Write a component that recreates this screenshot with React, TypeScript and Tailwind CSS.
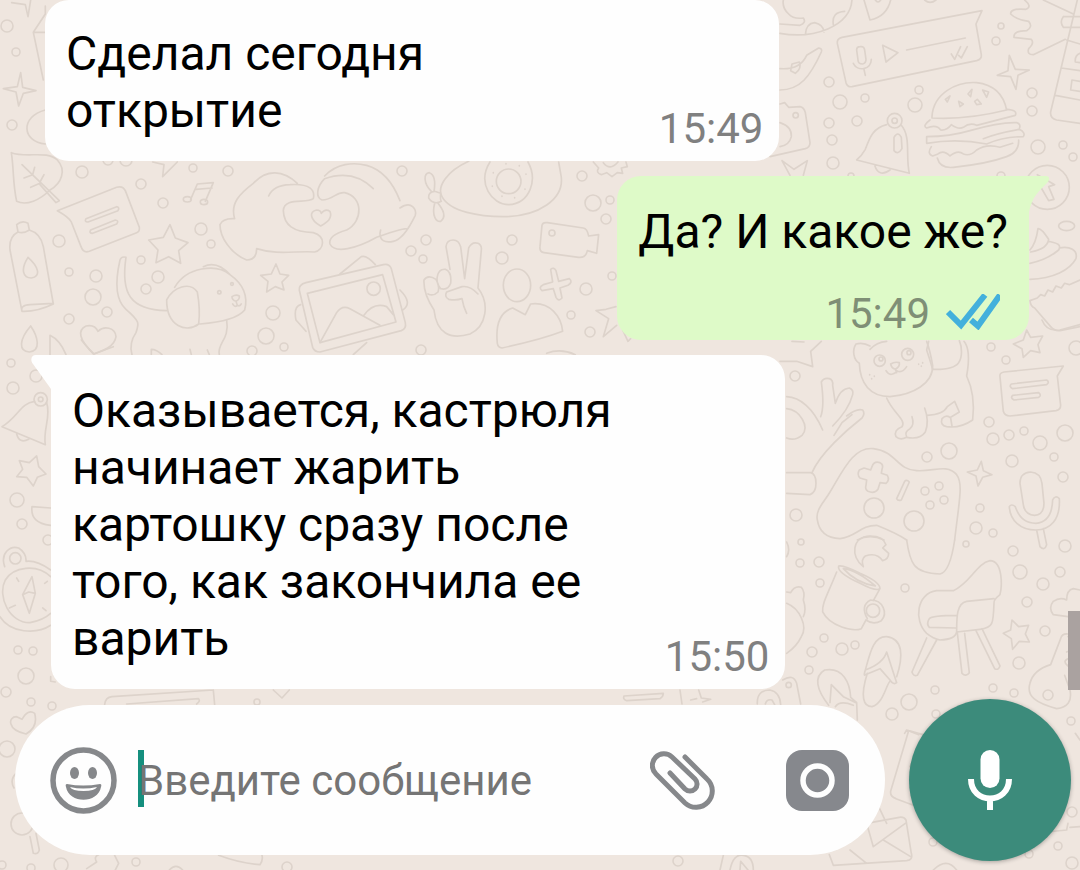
import type { ReactNode } from "react";

// x, y, radius of the small bubbles scattered over the wallpaper
const DOTS = [
  [82, 172, 6], [141, 184, 5], [163, 203, 5], [193, 168, 4], [228, 171, 5], [201, 229, 6], [211, 244, 4],
  [141, 260, 4], [158, 277, 6], [146, 289, 5], [59, 241, 6], [69, 272, 4], [96, 276, 6], [93, 297, 8],
  [107, 312, 5], [69, 319, 5], [11, 363, 4], [273, 313, 7], [266, 336, 8], [284, 347, 4], [252, 351, 5],
  [108, 160, 5], [126, 160, 6],
  [402, 171, 5], [426, 240, 5], [411, 251, 5], [423, 259, 4], [512, 240, 5], [502, 258, 6], [582, 176, 5],
  [593, 203, 8], [610, 200, 4], [606, 219, 5], [612, 276, 4], [586, 289, 6], [571, 315, 4], [590, 332, 5],
  [421, 350, 5],
  [829, 82, 5], [840, 102, 7], [865, 98, 4], [919, 90, 4], [915, 105, 7], [829, 123, 5], [857, 121, 5],
  [832, 140, 5], [833, 163, 6], [1001, 26, 3], [996, 41, 4], [1032, 93, 5], [1032, 111, 5], [1038, 147, 7],
  [1063, 145, 4], [1073, 157, 4], [851, 176, 3], [1001, 176, 4],
  [991, 347, 4], [1006, 360, 4], [795, 376, 5], [989, 422, 5], [993, 439, 6], [1009, 435, 5], [1024, 431, 4],
  [1040, 443, 7], [1065, 433, 8], [1054, 457, 4], [1012, 461, 6], [1063, 477, 5], [980, 508, 4], [976, 528, 6],
  [993, 533, 4], [927, 457, 5], [949, 451, 8], [796, 515, 6], [1076, 348, 7],
  [874, 508, 10], [914, 521, 10], [925, 491, 4], [939, 486, 4], [930, 505, 4], [944, 500, 4],
  [801, 542, 3], [800, 563, 4], [819, 562, 5], [820, 583, 4], [905, 588, 4], [966, 544, 3], [1013, 551, 5],
  [1020, 572, 7], [1043, 584, 6], [1060, 572, 5], [1065, 546, 6], [1027, 602, 5], [1045, 631, 5],
  [1019, 663, 6], [824, 638, 4], [812, 652, 5], [842, 649, 6], [855, 645, 4], [809, 670, 4], [935, 690, 4],
  [909, 702, 8], [892, 714, 6], [936, 714, 4], [993, 688, 4], [1014, 693, 4], [1048, 695, 5], [1071, 721, 4],
  [13, 388, 6], [17, 500, 7], [22, 524, 5], [18, 650, 4], [33, 651, 4], [26, 676, 8], [6, 692, 5],
  [31, 702, 4], [52, 706, 4], [7, 26, 6], [16, 52, 4], [12, 125, 5], [36, 376, 6], [48, 540, 5],
  [7, 749, 8], [2, 865, 4], [31, 868, 4], [61, 865, 7], [136, 862, 4], [287, 867, 5], [257, 702, 3],
  [678, 861, 5], [933, 842, 4], [1072, 812, 5], [1058, 846, 4], [1029, 854, 4], [1072, 863, 6],
];

function Sketch({ x, y, children }: { x: number; y: number; children: ReactNode }) {
  return <g transform={`translate(${x} ${y}) scale(0.3333)`}>{children}</g>;
}

function Wallpaper() {
  return (
    <svg
      className="absolute inset-0 h-full w-full"
      viewBox="0 0 1080 870"
      preserveAspectRatio="xMinYMin slice"
      fill="none"
      stroke="#ddd3cb"
      strokeWidth="5"
      strokeLinecap="round"
      strokeLinejoin="round"
      aria-hidden="true"
    >
      <g strokeWidth="1.6">
        {DOTS.map(([x, y, r]) => (
          <circle key={`${x}-${y}`} cx={x} cy={y} r={r} />
        ))}
      </g>

      {/* Top left: stars, leaf */}
      <Sketch x={0} y={0}>
        <path d="M35 8 L76 14 L84 50 L92 0 M62 218 L68 262 L108 272 L70 280 L56 318 L48 276 L10 266 L52 260 Z" />
        <path d="M136 18 V42 L100 97 L130 240 M100 97 H136 M136 330 C60 350 65 425 136 432" />
      </Sketch>

      {/* Left: leaf, note, bottle, puppy, heart hands */}
      <Sketch x={0} y={140}>
        <path d="M34 38 C80 55 140 30 172 60 C200 90 185 130 150 150 C120 180 80 198 50 184 C38 130 42 90 34 38 Z" />
        <path d="M66 74 L178 182 L168 188 L120 134 M98 104 L104 82 M98 104 L72 114 M120 126 L132 104 M120 130 L92 142" />
        <path d="M172 212 L350 142 Q368 136 376 152 L418 262 Q420 274 410 278 L268 334 Q250 340 244 322 L214 246 Q208 232 172 212 Z" />
        <path d="M258 236 L350 200 Q360 202 354 212 L264 246 Q252 246 258 236 Z M272 270 L346 240 Q358 242 350 252 L278 280 Q266 280 272 270 Z" />
        <path d="M50 254 Q66 240 84 250 L88 270 Q70 282 54 276 Z M54 276 Q26 290 30 330 L66 514 Q110 516 160 492 L130 320 Q122 280 88 270 M66 514 Q60 496 90 494 L160 490 M84 352 C60 390 70 414 94 414 C124 410 116 380 84 352 Z" />
        <path d="M92 558 C56 600 56 634 88 636 C124 632 114 590 92 558 Z M150 646 V586 Q180 600 198 644" />
        <path d="M282 642 C236 600 232 570 258 558 Q284 552 294 574 C312 556 346 562 348 590 C344 620 310 632 282 642 Z" />
        <path d="M510 254 L526 294 L564 308 L536 332 L542 370 L506 350 L468 368 L474 330 L446 300 L490 292 Z" />
        <path d="M828 372 L840 402 L866 406 L846 426 L852 450 L826 440 L800 456 L804 424 L782 406 L814 402 Z" />
        <path d="M378 352 Q364 348 360 360 C344 430 346 480 378 508 C420 544 418 550 408 578 Q386 610 396 644 M378 352 C362 460 390 510 500 512" />
        <path d="M524 442 C560 380 650 370 690 404 C740 440 742 480 734 510 C710 540 650 548 600 552 M610 380 Q650 360 690 404 M500 480 C520 440 570 424 592 456 C600 500 600 520 596 552 C560 580 500 560 500 480 Z" />
        <path d="M696 470 Q708 462 718 468 Q720 478 708 484 Q696 480 696 470 Z M708 484 L712 496 M698 492 Q704 504 712 496 Q720 500 724 492 M680 540 C690 600 650 610 658 644 M454 644 V628 Q470 628 486 644 M570 628 L574 644 M622 630 L628 644" />
        <circle cx="658" cy="457" r="5" /><circle cx="696" cy="432" r="4" />
        <path d="M458 66 L492 74 L488 110 L532 66 M572 178 L592 132 L640 128 L616 184 M588 148 L636 144" />
        <ellipse cx="562" cy="178" rx="12" ry="8" /><ellipse cx="612" cy="186" rx="11" ry="8" />
        <path d="M806 168 Q820 136 870 134 C930 130 946 150 940 176 C920 192 852 170 850 212 C852 256 880 276 940 278 C980 290 972 330 944 336 C890 332 830 346 770 326 Q770 360 740 360 C690 340 660 290 660 254 Q668 234 704 236 C690 190 720 160 760 130 C800 86 850 90 892 130" />
        <path d="M962 258 C930 240 926 214 950 210 Q962 210 964 220 Q976 204 990 214 C998 236 982 246 962 258 Z" />
        <path d="M1120 146 Q1060 86 974 116 C950 140 946 172 966 180 C1000 180 1010 154 1034 158 C1090 170 1090 244 1040 270 Q984 286 990 312 C1004 342 1070 326 1130 292 Q1220 260 1220 268" />
        <path d="M974 108 C1010 70 1060 66 1100 76 C1150 90 1180 130 1200 182 M1200 204 C1236 180 1250 210 1246 226 C1220 280 1200 300 1180 304 Q1140 312 1140 280 L1142 270" />
        <path d="M898 450 Q896 434 918 428 L1150 374 Q1168 370 1174 386 L1216 548 Q1220 566 1204 572 L960 636 Q944 636 938 622 Z M922 460 L1148 404 L1188 546 L960 608 Z" />
        <path d="M960 608 L1010 518 Q1026 494 1050 506 L1140 556 M1092 526 Q1120 486 1160 500 L1180 524 M1020 402 L1084 350 Q1100 344 1126 374 M888 540 Q880 500 902 494 M888 540 L918 574 M1060 644 L1100 608 M1200 450 Q1240 490 1208 510" />
        <circle cx="1121" cy="446" r="20" />
      </Sketch>

      {/* Centre: submarine, peace hand, contact, camera */}
      <Sketch x={340} y={140}>
        <path d="M386 64 C320 94 290 140 306 170 C330 216 420 230 490 230 C590 230 680 180 662 100 L656 66" />
        <circle cx="506" cy="124" r="37" />
        <path d="M450 66 C410 130 456 194 506 194 C570 190 594 120 564 66" />
        <path d="M460 98 v1 M498 71 v1 M538 77 v1 M558 102 v1 M555 147 v1 M524 173 v1 M486 168 v1 M457 138 v1" />
        <path d="M266 174 Q264 156 284 154 L302 160 Q300 180 304 184 Q280 196 266 174 Z M274 154 C250 130 250 100 268 98 Q290 106 282 154 M284 190 C274 230 290 246 302 244 C320 230 310 210 294 190" />
        <path d="M760 66 L776 84 Q766 98 784 104 L800 98 L816 110 L832 98 L848 100 L844 84 L862 80 L858 66 M790 68 Q810 94 834 66" />
        <path d="M606 256 Q608 246 622 248 L730 264 Q742 266 746 288 L776 284 L770 340 L742 332 Q738 354 716 352 L612 338 Q598 336 600 320 Z" />
        <circle cx="636" cy="279" r="9" />
        <path d="M330 388 L318 320 Q320 300 340 300 Q356 300 362 320 L374 416 L386 324 Q396 304 414 310 Q426 316 424 330 L414 444 C450 490 440 560 390 582 C330 600 290 580 282 510 C262 480 250 450 252 420 Q264 402 288 418 Q300 438 294 456 Q280 470 264 462 M292 410 Q296 386 316 388 Q336 396 332 430 Q324 452 302 446 Q288 430 292 410" />
        <path d="M414 462 Q390 436 366 440 L320 456 Q312 470 326 478 Q350 482 366 476 Q370 500 380 520" />
        <ellipse cx="531" cy="436" rx="41" ry="49" />
        <path d="M472 610 C466 550 480 516 518 504 L556 524 L572 492 C630 484 664 530 668 574 Q600 600 486 624 Q474 622 472 610 Z" />
        <path d="M632 388 Q642 380 648 392 L656 424 L688 416 Q700 426 684 436 L660 444 L666 474 Q656 486 648 472 L640 446 L606 452 Q594 442 610 434 L638 426 Z" />
        <path d="M828 500 L798 508 L768 512 L806 536 L790 590 L830 556 M848 570 L864 604 L872 596 M620 640 Q662 624 706 644" />
      </Sketch>

      {/* Top right: voice note, bell, burger, shirt */}
      <Sketch x={770} y={0}>
        <path d="M30 72 L90 76 Q110 68 100 54 Q70 58 56 42 Q36 24 40 0 M30 100 C130 118 240 80 246 0 M106 104 Q108 70 134 68 Q160 74 162 96 M190 74 Q184 36 224 34" />
        <path d="M282 0 L300 60 Q350 50 362 0 M316 0 Q324 12 332 0 M464 0 Q480 14 498 0" />
        <path d="M202 130 Q200 116 216 112 L636 32 L618 72 L634 164 Q636 178 620 182 L246 260 Q232 262 228 248 Z M338 136 L384 158 L348 186 Z M410 150 L586 114" />
        <path d="M260 150 Q260 140 270 140 Q282 138 284 150 L288 178 Q288 190 278 192 Q264 192 264 180 Z M250 190 C262 216 304 210 304 178 M282 208 L286 226 M544 162 L554 178 L572 140 M566 166 L574 174 L592 140" />
        <path d="M30 206 Q90 210 110 166 L146 144 Q158 146 154 156 C120 230 90 270 30 270 M62 212 L66 192 L88 186 Q96 206 76 220 Z" />
        <path d="M30 312 L44 308 L56 322 L90 320 Q102 322 106 338 L120 428 Q120 442 106 446 L0 470 M30 368 Q66 380 64 410 Q58 436 30 440" />
        <circle cx="77" cy="346" r="8" /><circle cx="374" cy="362" r="22" /><circle cx="374" cy="362" r="8" />
        <path d="M350 374 C310 384 300 410 286 448 Q276 466 260 480 L418 520 C406 470 424 410 394 376 M372 412 Q384 392 394 412 L396 446 Q384 466 372 452 Z M314 496 Q326 534 360 510" />
        <path d="M36 482 L72 508 L112 482 L100 526 M36 482 L60 526" />
        <path d="M486 350 C490 280 560 244 620 248 C670 254 700 280 710 330 Q590 360 486 354 Z M526 298 L540 288 L532 306 Z M566 304 L580 312 L570 320 Z M594 282 L606 268 L602 290 Z M638 270 L656 276 L650 292 Z M614 304 L622 298 L634 312 L620 314 Z" />
        <path d="M480 360 Q456 378 470 384 Q500 372 512 390 Q530 392 544 374 Q566 390 580 382 Q600 366 620 376 L736 346 Q744 330 710 328 M470 410 Q540 410 600 392 Q690 366 740 368 Q754 372 748 386 M470 410 L470 430 Q560 414 650 432 Q700 410 760 410 Q768 398 748 388 Q680 400 640 416" />
        <path d="M484 440 Q470 462 488 468 L504 462 Q520 448 540 468 Q564 448 580 462 Q600 470 620 450 Q650 430 690 442 L728 430 M502 474 Q510 506 550 502 Q650 492 710 470 Q748 456 746 420" />
        <path d="M718 166 L736 208 L778 210 L744 226 L738 268 L722 230 L682 226 L714 212 Z" />
        <path d="M764 0 Q788 20 768 28 Q720 24 722 42 Q740 60 776 64 Q790 80 770 92 Q730 92 732 112 L784 118 Q794 130 776 146 Q770 164 790 164 L886 118 M820 0 L910 42 M922 0 L842 336 Q840 356 860 360 L930 370 M890 120 L930 132 M874 204 L930 212 M856 286 L930 300 M880 50 H930 M880 82 H930 M880 50 Q868 66 880 82 M930 160 Q914 166 916 186 L930 188 M930 244 L906 240 L902 270 L930 274" />
      </Sketch>

      {/* Right edge: badge and cupcake */}
      <Sketch x={800} y={170}>
        <circle cx="742" cy="52" r="66" />
        <path d="M712 14 L764 44 L746 50 L762 88 L746 92 L724 54" />
        <ellipse cx="800" cy="168" rx="24" ry="14" />
        <path d="M690 240 Q708 220 714 176 Q724 174 746 208 C744 226 724 240 692 246 M746 214 C770 220 786 222 776 240 Q740 270 690 280 M778 234 C810 228 834 240 828 266 C810 300 760 326 690 328" />
        <path d="M690 392 L712 384 L722 374 L734 378 L744 360 L758 366 L768 348 L784 354 L794 340 L808 344 L840 330 M690 392 Q692 410 704 414 L752 470 Q764 484 780 482 L840 470" />
      </Sketch>

      {/* Right: cat, hand, gamepad, note, microphone */}
      <Sketch x={780} y={320}>
        <path d="M740 30 L752 52 L788 48 L774 74 L780 98 L752 92 L730 112 L726 86 L700 72 L730 60 Z M786 0 Q800 36 840 30 L900 14" />
        <path d="M0 124 L50 124 L98 140 L92 94 L124 64 M36 64 L72 66" />
        <path d="M270 78 Q250 66 228 72 C216 90 220 120 238 130 C240 190 270 230 330 230 C400 224 460 190 458 136 Q450 90 440 64 M270 88 Q290 66 320 64" />
        <circle cx="299" cy="122" r="17" /><circle cx="383" cy="103" r="18" /><circle cx="303" cy="117" r="6" /><circle cx="387" cy="98" r="6" />
        <path d="M332 132 Q344 124 358 128 Q360 140 346 148 Q334 144 332 132 Z M346 148 L350 158 M318 152 Q326 166 338 162 Q350 158 350 152 Q366 162 380 140 M269 164 v1 M283 168 v1 M275 176 v1 M416 132 v1 M428 128 v1 M424 138 v1" />
        <path d="M446 64 L440 90 Q450 120 458 148 Q520 150 536 128 C548 110 546 80 538 62 M552 64 Q574 90 560 168 C580 210 584 250 578 300 Q540 326 500 320 Q480 316 486 296 Q500 282 512 294 L516 318 M442 286 Q490 284 502 260 L524 244 L538 276 L512 292" />
        <path d="M320 234 C340 280 380 300 366 320 Q340 330 348 350 Q360 362 380 352 Q420 360 436 336 C446 310 440 280 434 264 M380 350 Q372 336 390 326 Q404 314 396 290" />
        <path d="M20 230 C60 232 100 264 128 330 M122 290 Q134 260 124 186 Q132 172 148 176 Q160 180 158 196 L166 250 Q180 206 208 204 Q222 210 218 224 Q206 270 158 318 M200 288 Q230 264 248 270 Q256 280 246 294 C200 330 120 400 96 458 M162 346 L186 308 L216 284 M20 266 C60 270 90 320 66 346 Q44 364 20 354 M20 458 L92 458 Q108 462 108 490 Q108 518 90 524 L20 520" />
        <path d="M112 600 C106 570 130 550 150 516 C190 450 220 380 280 386 C350 394 350 450 410 452 C460 456 500 430 530 464 C550 490 538 540 524 660 M112 600 Q120 654 180 656 C230 650 240 616 290 616 Q350 640 380 660 M232 660 Q270 640 312 660" />
        <path d="M276 440 Q282 422 300 428 Q312 434 306 448 L304 460 L322 466 Q330 480 318 490 L300 488 L294 508 Q284 522 264 514 Q254 508 258 496 L260 480 L240 474 Q230 464 238 450 L252 444 L272 450 Z M374 484 Q380 478 388 486 L364 540 Q354 544 350 536 Z" />
        <path d="M660 170 Q658 158 672 156 L850 138 L832 168 L842 256 Q842 270 828 272 L690 288 Q674 288 670 274 Z M694 192 L800 180 Q810 186 800 194 L698 206 Q686 200 694 192 Z M698 226 L776 218 Q786 226 776 232 L702 240 Q690 234 698 226 Z" />
        <path d="M604 424 L610 452 L636 464 L608 472 L594 498 L588 468 L562 456 L592 450 Z" />
        <path d="M720 490 Q720 458 752 456 Q782 458 786 490 L792 550 Q792 584 764 586 Q734 584 730 554 Z M688 560 Q694 550 706 560 Q722 610 768 610 Q816 606 818 540 Q826 524 838 536 C842 600 810 630 768 630 C720 630 690 600 688 560 Z M770 630 L780 680 Q794 694 800 674 L790 626" />
      </Sketch>

      {/* Lower right: mug, chair, flip-flops, guitar */}
      <Sketch x={780} y={520}>
        <path d="M380 60 C390 130 400 160 480 162 Q510 156 524 60" />
        <path d="M250 140 C210 110 216 50 270 48 Q310 48 318 74 L308 84 L326 100 Q326 118 308 122 Q290 96 256 108 Q242 118 250 140 Z" />
        <path d="M176 138 Q190 134 240 160 Q300 186 300 206 Q290 216 240 190 Q170 158 176 138 Z M190 146 Q230 150 286 198 Q230 190 190 146 M170 156 C140 230 126 250 128 276 C150 320 220 336 244 326 L258 300 M300 206 L280 242 M262 296 Q240 256 272 240 C310 240 324 280 304 302 Q280 316 258 300" />
        <circle cx="279" cy="272" r="20" />
        <path d="M20 216 L32 218 Q44 196 64 202 Q76 216 70 240 Q80 270 70 290 M20 250 C60 266 84 320 64 350 Q50 380 20 400 M20 66 Q32 90 20 110" />
        <path d="M440 340 C400 300 410 220 470 212 L520 212 C570 190 590 130 630 122 C670 124 666 200 660 224 Q640 240 642 250 C640 310 640 324 600 328 L530 336 Q526 358 480 360 Q460 356 440 340 Z M530 336 C530 290 530 250 560 244 L642 236 M528 324 L448 322 Q438 312 448 296 Q456 286 532 286" />
        <path d="M440 354 L396 456 Q400 470 412 466 L470 360 M532 338 L546 460 Q558 472 568 458 L554 340 M588 332 L644 446 Q656 452 660 438 L606 326" />
        <path d="M696 300 L716 320 L746 316 L736 342 L748 366 L718 364 L698 388 L694 356 L670 340 L692 330 Z" />
        <path d="M256 450 C270 400 280 348 320 350 C370 356 370 410 350 470 M256 450 Q250 470 256 464 L300 446 L330 480 Q340 496 350 488 L320 396 Q310 430 256 450 M262 460 C240 530 250 560 276 560 C310 550 316 500 330 484" />
        <path d="M146 556 C110 510 100 470 134 450 C190 440 210 490 212 532 L230 548 L232 600 M150 548 L154 494 L190 530 L228 548 M166 560 Q180 540 220 556 M8 480 Q40 460 50 490 L62 552" />
        <circle cx="26" cy="495" r="8" />
        <path d="M864 290 L820 284 Q804 264 820 244 Q840 230 860 240 Q860 210 880 206 L900 210 M864 342 Q846 340 842 356 L812 434 Q760 450 750 490 C738 530 770 550 830 566 Q880 560 870 510 L854 466 M864 350 Q890 350 886 370 Q880 390 860 396 M864 416 Q846 424 864 438" />
        <path d="M374 640 L380 630 L416 644" />
      </Sketch>

      {/* Left edge: bell, star, compass */}
      <Sketch x={0} y={340}>
        <path d="M244 0 L280 42 L340 20 M104 184 C60 190 56 230 6 260 L136 314 C128 270 154 230 140 188 M50 282 Q58 312 86 298" />
        <circle cx="122" cy="178" r="20" /><circle cx="122" cy="178" r="7" />
        <path d="M110 348 L116 380 L138 402 L112 412 L100 438 L80 412 L50 410 L68 388 L58 362 L88 368 Z M152 504 L96 500 Q90 550 152 556 M14 680 C0 640 30 616 56 624 Q80 640 78 664 Q110 660 152 690 M152 710 C110 670 40 680 16 720 C-10 770 30 850 90 848 Q130 840 152 820 M0 830 C30 880 110 884 152 856" />
        <circle cx="46" cy="655" r="17" />
        <path d="M96 710 L106 760 L88 820 L68 764 Z M68 764 L86 756 L106 760 M50 714 L56 724 M28 804 L46 796 M142 724 L134 730 M128 804 L138 812 M152 1010 V1024 L166 1026" />
      </Sketch>

      {/* Behind the composer */}
      <Sketch x={0} y={690}>
        <path d="M78 132 C20 120 24 80 50 80 L66 88 Q84 56 104 70 C112 100 100 120 78 132 Z M314 44 Q316 22 336 20 L640 0 M380 42 L596 26 Q602 34 590 42 M640 0 L644 44 M820 0 L846 24 L868 0 M90 440 L100 490 Q114 494 118 480 L108 430 M48 250 Q28 270 42 294" />
        <circle cx="66" cy="402" r="33" />
        <path d="M260 536 L290 516 Q280 500 296 494 M344 496 L356 520 L346 540 M656 496 Q720 520 780 524 Q790 510 786 496 M508 540 Q528 518 548 540" />
      </Sketch>
      <Sketch x={620} y={690}>
        <path d="M12 18 L130 10 Q130 20 120 26 L20 32 Q8 28 12 18 M180 0 L186 42 M236 0 L244 24 L272 28 L248 36 M212 30 L230 26 M412 42 Q410 0 450 0 Q480 6 482 44 M436 42 Q440 26 456 30 L464 44" />
        <path d="M866 122 L812 304 Q810 320 828 326 L880 346 M866 122 L930 140 M870 230 L900 170 M628 494 L640 526 L860 512 Q880 510 874 490 L858 390 Q852 380 838 382 L740 400 M740 400 L760 470 L856 400 M790 450 L872 500 M690 480 L740 520 M776 350 L800 400 M330 540 Q340 490 370 496 Q400 500 400 540 M300 540 L310 496 M360 540 L362 514 L384 540 M940 540 Q980 500 1010 540 M1350 412 L1380 410 M1280 426 L1340 420 L1344 400 M1366 130 L1380 150" />
      </Sketch>
    </svg>
  );
}

function Message({ text, time, className, tail }: { text: string; time: string; className: string; tail?: boolean }) {
  return (
    <article className={`relative flex w-[68%] items-end justify-between gap-6 rounded-3xl bg-[#fefefe] pr-4 pl-[21px] ${className}`}>
      {tail && (
        <svg className="absolute top-0 -left-5 h-9 w-6" viewBox="0 0 24 36" fill="#fefefe" aria-hidden="true">
          <path d="M24 0H5C0 0-1 5 2 9L20 34V36H24Z" />
        </svg>
      )}
      <p className="min-w-0 flex-1 pb-[22px] text-[48px] leading-[57px] text-black">{text}</p>
      <time className="pb-3 text-[42px] leading-10 text-[#808080]">{time}</time>
    </article>
  );
}

function ReadTicks() {
  return (
    <svg className="h-9 w-[54px]" viewBox="0 0 54 36" fill="none" stroke="#43b0dc" strokeWidth="6" aria-hidden="true">
      <path d="M2 18L15 31L39 1" />
      <path d="M25 26L32 32L54 1" />
    </svg>
  );
}

function Composer() {
  return (
    <form className="mt-auto flex items-center gap-6 pr-[9px] pb-[9px] pl-[15px]" onSubmit={(e) => e.preventDefault()}>
      <div className="flex h-[150px] min-w-0 flex-1 items-center rounded-full bg-[#fefefe] pr-9 pl-[35px]">
        <button type="button" aria-label="Эмодзи" className="shrink-0">
          <svg className="size-[67px]" viewBox="0 0 67 67" fill="#86888b" aria-hidden="true">
            <circle cx="33.500" cy="33.500" r="30.500" fill="none" stroke="#86888b" strokeWidth="5.500" />
            <ellipse cx="24.500" cy="26" rx="4.500" ry="6" />
            <ellipse cx="42.500" cy="26" rx="4.500" ry="6" />
            <path fillRule="evenodd" d="M17 37Q33 40 50 37Q52 37 51 40C48 57 19 57 16 40Q15 37 17 37ZM20 40Q22 44 33.500 44Q45 44 47 40Q33 43 20 40Z" />
          </svg>
        </button>
        <div className="relative ml-[21px] min-w-0 flex-1">
          <span className="absolute top-0 left-0 h-[57px] w-1.5 bg-[#158f7e]" />
          <input
            type="text"
            aria-label="Введите сообщение"
            placeholder="Введите сообщение"
            className="relative block h-[60px] w-full bg-transparent text-[42px] text-black outline-none placeholder:text-[#757575]"
          />
        </div>
        <button type="button" aria-label="Прикрепить файл" className="mr-[70px] shrink-0">
          <svg className="h-[60px] w-[66px]" viewBox="0 0 66 60" fill="none" stroke="#86888b" strokeWidth="5" strokeLinecap="round" aria-hidden="true">
            <path d="M35 7L57 29A16 16 0 0 1 35 53L6 24A11.500 11.500 0 0 1 22 7L45 29A7 7 0 0 1 35 39L20 23" />
          </svg>
        </button>
        <button type="button" aria-label="Камера" className="shrink-0">
          <svg className="h-[61px] w-[63px]" viewBox="0 0 63 61" aria-hidden="true">
            <rect width="63" height="61" rx="16" fill="#86888d" />
            <circle cx="31.500" cy="30.500" r="14.500" fill="none" stroke="#fefefe" strokeWidth="5.500" />
          </svg>
        </button>
      </div>
      <button
        type="button"
        aria-label="Голосовое сообщение"
        className="flex size-[162px] shrink-0 items-center justify-center rounded-full bg-[#3c8b7b] shadow-[0_1px_4px_rgba(0,0,0,0.3)]"
      >
        <svg className="h-[60px] w-11" viewBox="0 0 44 60" fill="none" stroke="#ffffff" strokeWidth="6" aria-hidden="true">
          <rect x="12.500" y="0" width="19" height="38" rx="9.500" fill="#ffffff" stroke="none" />
          <path d="M3 29C3 55 41 55 41 29M22 48V60" />
        </svg>
      </button>
    </form>
  );
}

export default function App() {
  return (
    <main className="relative min-h-screen overflow-hidden bg-[#efe6df] font-['Roboto',sans-serif]">
      <Wallpaper />
      <div className="relative flex min-h-screen flex-col">
        <section className="flex flex-col gap-[15px]" aria-label="Переписка">
          <Message className="ml-[45px] pt-[25px]" text="Сделал сегодня открытие" time="15:49" />

          <article className="relative mr-[51px] self-end rounded-3xl rounded-tr-none bg-[#defac8] px-[21px] pt-[27px] pb-1.5">
            <svg className="absolute top-0 -right-5 h-9 w-6" viewBox="0 0 24 36" fill="#defac8" aria-hidden="true">
              <path d="M0 0H21C25 0 25 4 22 7C13 16 7 21 4 36H0Z" />
            </svg>
            <p className="text-[48px] leading-[57px] text-black">Да? И какое же?</p>
            <div className="mt-[34px] flex items-start justify-end gap-4 pr-2">
              <time className="text-[42px] leading-10 text-[#7f8f76]">15:49</time>
              <ReadTicks />
            </div>
          </article>

          <Message
            className="ml-[51px] rounded-tl-none pt-[27px]"
            text="Оказывается, кастрюля начинает жарить картошку сразу после того, как закончила ее варить"
            time="15:50"
            tail
          />
        </section>
        <Composer />
      </div>
      <div className="absolute top-[611px] right-0 h-[79px] w-3 bg-[#aaa2a0]" />
    </main>
  );
}
